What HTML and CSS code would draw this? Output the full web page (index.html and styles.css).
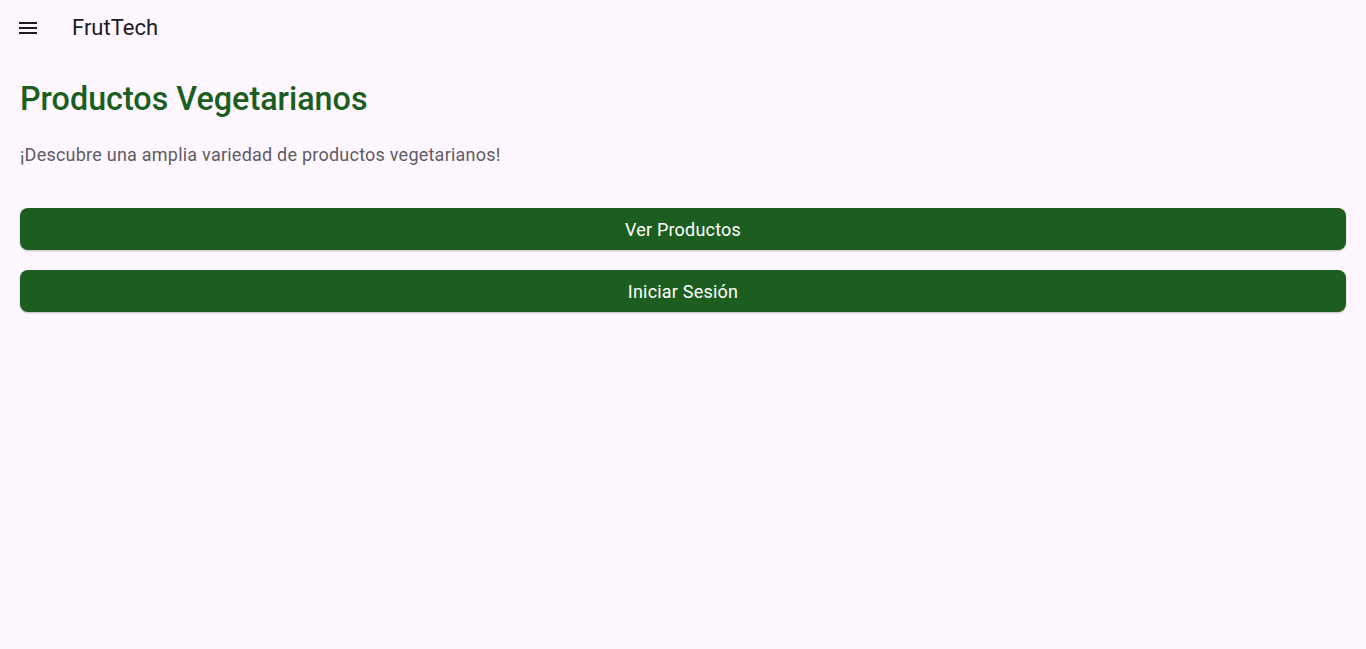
FILE: index.html
```html
<!DOCTYPE html>
<html lang="es">
<head>
<meta charset="utf-8">
<title>FrutTech</title>
<link rel="stylesheet" href="styles.css">
</head>
<body>
<header class="appbar">
  <button class="menu-btn" aria-label="Menú">
    <svg width="24" height="24" viewBox="0 0 24 24"><path d="M3 18h18v-2H3v2zm0-5h18v-2H3v2zm0-7v2h18V6H3z" fill="#1d1b20"/></svg>
  </button>
  <span class="app-title">FrutTech</span>
</header>
<main class="content">
  <h1 class="title">Productos Vegetarianos</h1>
  <p class="subtitle">¡Descubre una amplia variedad de productos vegetarianos!</p>
  <div class="actions">
    <button class="btn">Ver Productos</button>
    <button class="btn">Iniciar Sesión</button>
  </div>
</main>
</body>
</html>
```
FILE: styles.css
```css
html, body {
  margin: 0;
  padding: 0;
  background: #fef7ff;
  font-family: Roboto, "Noto Sans", sans-serif;
  height: 100%;
}
.appbar {
  height: 56px;
  display: flex;
  align-items: center;
  padding: 0 4px;
}
.menu-btn {
  width: 48px;
  height: 48px;
  border: none;
  background: transparent;
  display: flex;
  align-items: center;
  justify-content: center;
  padding: 0;
}
.app-title {
  margin-left: 20px;
  font-size: 22px;
  color: #1d1b20;
  font-weight: 400;
  margin-top: -2px;
}
.content {
  padding: 20px;
}
.title {
  margin: 0;
  font-size: 32.3px;
  font-weight: 500;
  color: #1b5e20;
  line-height: 46px;
}
.subtitle {
  margin: 20px 0 0;
  font-size: 18px;
  letter-spacing: 0.23px;
  color: #605b64;
  line-height: 26px;
}
.actions {
  margin-top: 40px;
  display: flex;
  flex-direction: column;
  gap: 20px;
}
.btn {
  height: 42px;
  border: none;
  border-radius: 8px;
  background: #1b5e20;
  color: #ffffff;
  font-family: Roboto, "Noto Sans", sans-serif;
  font-size: 18px;
  font-weight: 400;
  letter-spacing: 0.2px;
  box-shadow: 0 1px 2px rgba(0,0,0,0.25);
}
```
